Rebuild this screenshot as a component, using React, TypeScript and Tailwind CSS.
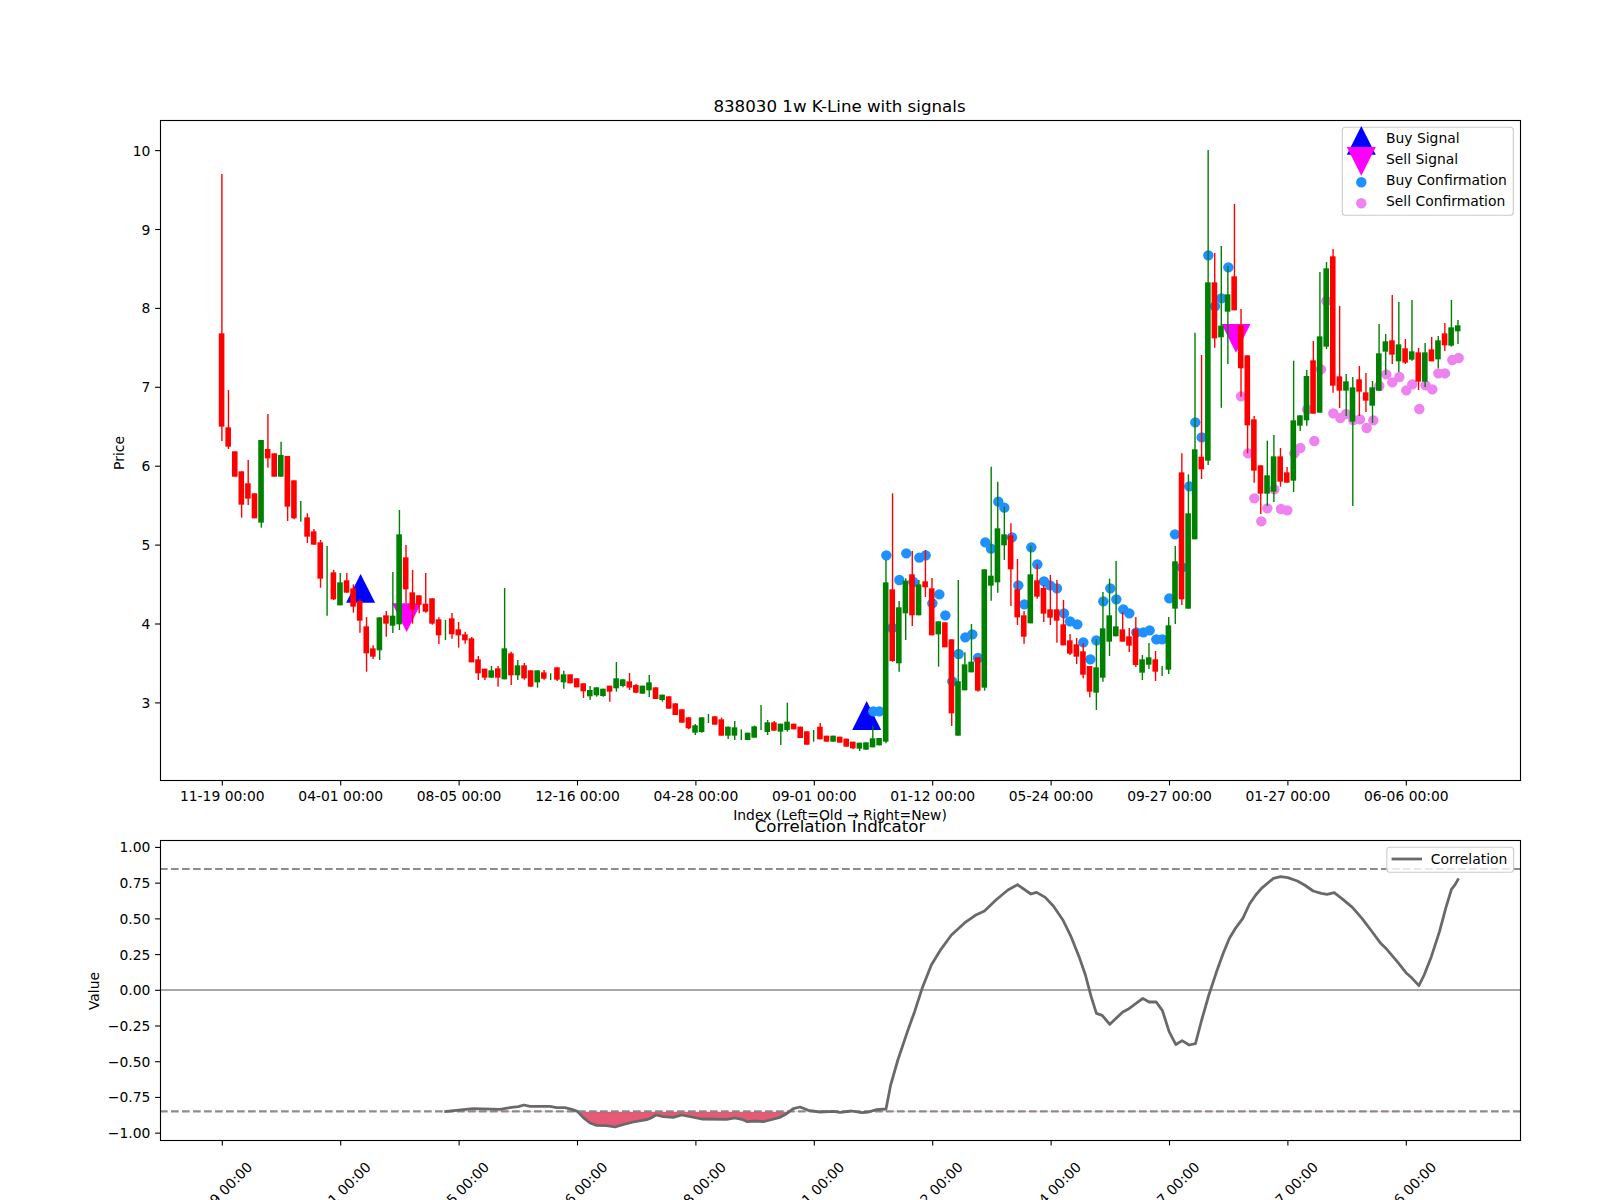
const X = (i: number) => 221.9 + 6.575 * i;

// Candle rows: [isRed, bodyTop, bodyBottom, wickTop, wickBottom], measured in 3x crop units from a y origin.
type Row = [number, number, number, number, number];
const segments: { y0: number; rows: Row[] }[] = [
  {
    y0: 450,
    rows: [
      [1, -350, -70, -828, -27], [1, -68, -10, -180, -3], [1, 4, 80, 4, 80], [1, 64, 164, 64, 203], [1, 100, 146, 30, 165],
      [1, 130, 205, 130, 205], [0, -30, 218, -30, 233], [1, -3, 25, -108, 53], [1, 10, 80, 10, 80], [0, 15, 80, -25, 80],
      [1, 18, 170, 18, 213], [1, 91, 205, 91, 208], [0, 184, 184, 153, 215], [1, 202, 260, 190, 279], [1, 244, 284, 237, 284],
      [1, 277, 386, 270, 413], [0, 390, 390, 288, 497], [1, 367, 448, 360, 450], [0, 397, 466, 369, 466], [1, 391, 428, 369, 428],
      [1, 415, 470, 403, 488], [1, 453, 512, 448, 548], [1, 529, 610, 501, 665], [1, 595, 620, 586, 627], [0, 502, 601, 502, 630],
      [1, 496, 521, 483, 560], [0, 497, 527, 366, 549], [0, 253, 523, 180, 540], [1, 322, 418, 285, 460], [1, 427, 478, 360, 521],
      [1, 436, 464, 436, 490], [1, 461, 485, 369, 488], [1, 445, 521, 445, 524], [1, 508, 556, 502, 582], [0, 540, 540, 510, 570],
      [1, 505, 553, 489, 566], [1, 538, 556, 516, 593], [1, 553, 571, 545, 581], [1, 565, 637, 561, 637], [1, 628, 670, 618, 690],
      [1, 656, 683, 656, 690], [0, 661, 683, 648, 683], [1, 655, 683, 648, 710], [0, 595, 688, 414, 688], [1, 610, 676, 605, 705],
      [0, 646, 676, 630, 690], [1, 646, 685, 639, 689], [1, 661, 710, 661, 710], [0, 661, 697, 661, 713], [1, 667, 686, 660, 689],
      [0, 680, 680, 670, 690], [1, 652, 689, 652, 693], [0, 673, 697, 662, 716], [1, 673, 700, 673, 700], [1, 685, 712, 685, 712],
      [1, 700, 724, 700, 744], [0, 720, 739, 708, 750], [0, 712, 736, 712, 740],
    ],
  },
  {
    y0: 600,
    rows: [
      [0, 266, 288, 266, 290], [1, 257, 275, 257, 305], [0, 235, 265, 186, 275], [0, 238, 258, 238, 262], [1, 244, 263, 219, 270],
      [1, 255, 278, 252, 280], [0, 257, 281, 257, 281], [0, 247, 271, 225, 291], [1, 262, 297, 262, 297], [0, 284, 300, 284, 305],
      [1, 289, 326, 289, 326], [1, 310, 345, 310, 345], [1, 328, 368, 328, 368], [1, 352, 385, 352, 388], [0, 376, 398, 372, 405],
      [0, 352, 396, 352, 398], [0, 355, 355, 342, 369], [1, 349, 374, 349, 374], [1, 358, 407, 353, 407], [0, 380, 407, 380, 417],
      [0, 382, 407, 363, 420], [0, 404, 404, 388, 420], [0, 398, 420, 398, 420], [0, 379, 413, 377, 413], [0, 352, 352, 315, 390],
      [0, 367, 396, 360, 405], [1, 367, 392, 363, 392], [0, 371, 395, 371, 435], [0, 365, 390, 308, 395], [1, 371, 388, 371, 388],
      [1, 380, 414, 380, 414], [1, 394, 434, 394, 434], [0, 407, 407, 390, 425], [1, 380, 418, 369, 418], [1, 407, 425, 407, 425],
      [0, 407, 425, 407, 425], [1, 410, 428, 410, 428], [1, 416, 440, 416, 440], [1, 425, 445, 425, 448], [0, 428, 446, 428, 453],
      [0, 427, 449, 427, 449], [0, 415, 442, 378, 442], [0, 414, 436, 414, 436],
    ],
  },
  {
    y0: 480,
    rows: [
      [0, 307, 785, 240, 790], [1, 328, 543, 40, 545], [0, 382, 550, 363, 575], [0, 302, 400, 295, 480], [1, 283, 406, 213, 438],
      [0, 313, 406, 300, 406], [1, 304, 322, 210, 351], [1, 325, 466, 294, 466], [0, 424, 463, 424, 560], [1, 427, 502, 427, 502],
      [1, 478, 700, 478, 738], [0, 604, 767, 300, 767], [0, 553, 631, 517, 631], [0, 545, 577, 432, 577], [1, 532, 632, 532, 635],
      [0, 268, 623, 268, 632], [0, 287, 317, -40, 362], [0, 145, 307, 5, 338], [0, 163, 196, 80, 240], [1, 166, 268, 130, 378],
      [1, 328, 412, 237, 435], [1, 406, 470, 393, 491], [0, 283, 430, 197, 430], [1, 301, 350, 252, 356], [1, 324, 401, 315, 426],
      [1, 388, 413, 285, 435], [1, 388, 422, 300, 488], [1, 433, 496, 360, 496], [1, 481, 521, 462, 525], [1, 493, 530, 474, 552],
      [1, 514, 584, 490, 595], [1, 558, 635, 558, 652], [0, 562, 638, 477, 690], [0, 445, 593, 336, 605], [0, 406, 485, 296, 528],
      [0, 439, 469, 243, 469], [1, 448, 485, 396, 485], [1, 469, 497, 444, 516], [1, 448, 555, 411, 561], [0, 538, 578, 525, 600],
      [0, 532, 554, 489, 567], [1, 538, 575, 513, 603], [0, 573, 573, 558, 588], [0, 436, 569, 411, 582],
    ],
  },
  {
    y0: 230,
    rows: [
      [0, 994, 1136, 948, 1182], [1, 727, 1108, 670, 1125], [0, 850, 1136, 733, 1136], [0, 658, 928, 308, 928], [1, 680, 718, 375, 747],
      [0, 157, 692, -240, 705], [1, 157, 325, 69, 353], [0, 287, 322, 48, 533], [0, 193, 245, 108, 402], [1, 139, 241, -78, 241],
      [1, 286, 415, 237, 500], [1, 376, 586, 376, 670], [1, 568, 722, 558, 758], [1, 706, 791, 706, 852], [0, 736, 791, 632, 828],
      [0, 679, 785, 615, 816], [1, 679, 755, 654, 770], [1, 727, 758, 711, 758], [0, 571, 752, 392, 786], [0, 556, 587, 556, 603],
      [0, 438, 571, 420, 587], [1, 391, 551, 333, 551], [0, 319, 548, 126, 548], [0, 115, 350, 96, 357], [1, 79, 467, 57, 488],
      [1, 439, 482, 228, 534], [0, 454, 482, 432, 558], [0, 472, 575, 441, 828], [1, 448, 485, 408, 558], [1, 487, 512, 429, 546],
      [0, 472, 527, 453, 579], [0, 370, 482, 282, 482], [0, 334, 365, 312, 435], [1, 331, 374, 195, 402], [0, 343, 394, 216, 426],
      [1, 355, 398, 327, 402], [0, 364, 389, 210, 392], [1, 367, 455, 354, 480], [0, 367, 455, 339, 471], [1, 358, 394, 321, 394],
      [0, 331, 388, 318, 415], [1, 310, 346, 279, 363], [0, 292, 347, 210, 350], [0, 286, 304, 270, 342],
    ],
  },
];

const candles = segments.flatMap((s) =>
  s.rows.map((r) => ({
    red: r[0] === 1,
    bt: s.y0 + r[1] / 3,
    bb: s.y0 + r[2] / 3,
    wt: s.y0 + r[3] / 3,
    wb: s.y0 + r[4] / 3,
  })),
);

const blueA: [number, number][] = [
  [40, 694], [58, 694], [79, 226], [118, 300], [139, 220], [178, 233], [197, 226], [160, 306], [238, 343], [217, 370], [256, 406],
  [97, 444], [296, 522], [316, 472], [337, 463], [354, 534], [277, 604], [376, 187], [393, 206], [415, 65], [433, 83], [456, 172],
  [514, 202], [532, 253], [475, 316], [493, 373], [552, 304], [570, 316], [591, 325], [612, 400], [630, 424], [652, 433], [670, 487],
  [709, 481], [691, 538], [730, 364], [751, 325], [769, 358], [790, 388], [808, 400], [829, 457], [850, 457], [869, 451], [889, 478],
  [907, 478],
];
const blueB: [number, number][] = [
  [28, 1105], [45, 913], [66, 1012], [88, 769], [106, 577], [125, 622], [145, 76], [165, 229], [184, 205], [205, 112],
];
const violet: [number, number][] = [
  [243, 499], [264, 670], [283, 805], [304, 874], [322, 835], [343, 778], [363, 837], [382, 841], [403, 670], [421, 654], [441, 538],
  [463, 633], [483, 418], [499, 213], [520, 550], [541, 564], [558, 552], [580, 570], [600, 568], [620, 594], [640, 571], [658, 468],
  [679, 433], [697, 457], [718, 441], [739, 481], [757, 463], [778, 537], [797, 466], [817, 478], [835, 430], [855, 430], [877, 390],
  [896, 384],
];

const lineA: [number, number][] = [
  [444.3, 1111.7], [473, 1108.7],
  ...([
    [0, 208], [35, 202], [55, 200], [72, 195], [90, 199], [150, 199], [170, 203], [195, 203], [215, 208], [232, 214], [250, 233], [270, 249],
    [290, 256], [320, 257], [345, 261], [365, 255], [400, 246], [440, 239], [455, 233], [468, 225], [490, 230], [520, 232], [545, 225],
    [575, 231], [605, 237], [680, 238], [705, 234], [725, 238], [742, 245], [765, 243], [790, 245], [810, 240], [840, 232], [860, 221],
    [880, 206], [900, 201], [925, 211], [960, 216], [1000, 214], [1020, 217], [1055, 213], [1085, 218], [1105, 216], [1130, 209], [1158, 207],
  ] as [number, number][]).map(([x, y]) => [500 + x / 3, 1040 + y / 3] as [number, number]),
];
const lineB: [number, number][] = ([
  [85, 765], [100, 690], [120, 605], [135, 545], [152, 470], [170, 405], [190, 358], [212, 315], [240, 278], [262, 256], [281, 243],
  [305, 210], [330, 180], [350, 164], [378, 192], [390, 187], [408, 202], [425, 228], [445, 270], [462, 320], [480, 385], [492, 435],
  [504, 500], [515, 550], [527, 556], [543, 583], [570, 546], [583, 536], [612, 505], [625, 516], [640, 516], [653, 542], [667, 605],
  [681, 644], [694, 632], [709, 645], [722, 641], [735, 570], [750, 495], [765, 430], [780, 370], [793, 325], [807, 292], [821, 265],
  [835, 222], [848, 195], [860, 175], [885, 145], [900, 140], [915, 143], [935, 153], [950, 165], [968, 183], [985, 190], [997, 193],
  [1012, 188], [1030, 208], [1050, 232], [1070, 265], [1090, 303], [1108, 338], [1122, 358], [1145, 397], [1162, 428], [1175, 445],
  [1189, 467], [1200, 435], [1215, 380], [1232, 305], [1245, 235], [1257, 178], [1265, 163], [1272, 145],
] as [number, number][]).map(([x, y]) => [850 + x / 2.09, 830 + y / 3] as [number, number]);
const corr = [...lineA, ...lineB];
const corrPts = corr.map((p) => p.join(",")).join(" ");
const fillPts = `${corrPts} 1459,1111.4 444,1111.4`;

const dates = ["11-19 00:00", "04-01 00:00", "08-05 00:00", "12-16 00:00", "04-28 00:00", "09-01 00:00", "01-12 00:00", "05-24 00:00", "09-27 00:00", "01-27 00:00", "06-06 00:00"];
const tickX = dates.map((_, k) => 222.3 + 118.4 * k);
const priceTicks = [10, 9, 8, 7, 6, 5, 4, 3];
const valueTicks = [
  ["1.00", 1], ["0.75", 0.75], ["0.50", 0.5], ["0.25", 0.25], ["0.00", 0],
  ["−0.25", -0.25], ["−0.50", -0.5], ["−0.75", -0.75], ["−1.00", -1],
] as [string, number][];
const vy = (v: number) => 990.3 - 142.86 * v;

function Tri({ cx, y1, y2, color }: { cx: number; y1: number; y2: number; color: string }) {
  return <polygon points={`${cx},${y1} ${cx - 14.5},${y2} ${cx + 14.5},${y2}`} fill={color} />;
}

export default function App() {
  return (
    <div className="w-[1600px] h-[1200px] bg-white overflow-hidden">
      <svg
        viewBox="0 0 1600 1200"
        width={1600}
        height={1200}
        className="block font-['DejaVu_Sans',sans-serif] text-[13.89px] fill-black"
      >
        <defs>
          <clipPath id="under">
            <rect x={160} y={1111.4} width={1360} height={29} />
          </clipPath>
        </defs>

        {/* Price panel */}
        <text x={839.5} y={112} textAnchor="middle" className="text-[16.67px]">838030 1w K-Line with signals</text>

        <Tri cx={360.6} y1={574} y2={602.7} color="#0000ff" />
        <Tri cx={406.6} y1={632} y2={603.3} color="#ff00ff" />
        <Tri cx={866.7} y1={701} y2={730} color="#0000ff" />
        <Tri cx={1236} y1={352.7} y2={324} color="#ff00ff" />
        {blueA.map(([x, y], i) => (
          <circle key={i} cx={860 + x / 3} cy={480 + y / 3} r={5.2} fill="#1e90ff" />
        ))}
        {blueB.map(([x, y], i) => (
          <circle key={i} cx={1160 + x / 3} cy={230 + y / 3} r={5.2} fill="#1e90ff" />
        ))}
        {violet.map(([x, y], i) => (
          <circle key={i} cx={1160 + x / 3} cy={230 + y / 3} r={5.2} fill="#ee82ee" />
        ))}

        {candles.map((c, i) => {
          const color = c.red ? "#ff0000" : "#008000";
          return (
            <g key={i}>
              <line x1={X(i)} x2={X(i)} y1={c.wt} y2={c.wb} stroke={color} strokeWidth={1.4} />
              {c.bb > c.bt && <rect x={X(i) - 3.1} y={c.bt} width={5.6} height={c.bb - c.bt} fill={color} />}
            </g>
          );
        })}

        <rect x={160.5} y={120.5} width={1360} height={660} fill="none" stroke="#000" strokeWidth={1.11} />
        {priceTicks.map((p) => {
          const y = 150.6 + (10 - p) * 78.9;
          return (
            <g key={p}>
              <line x1={155.1} x2={160} y1={y} y2={y} stroke="#000" strokeWidth={1.11} />
              <text x={150.3} y={y + 5} textAnchor="end">{p}</text>
            </g>
          );
        })}
        {tickX.map((x, k) => (
          <g key={k}>
            <line x1={x} x2={x} y1={781} y2={785.4} stroke="#000" strokeWidth={1.11} />
            <text x={x} y={801} textAnchor="middle">{dates[k]}</text>
          </g>
        ))}
        <text transform="translate(124,453) rotate(-90)" textAnchor="middle">Price</text>
        <text x={840} y={820} textAnchor="middle">Index (Left=Old → Right=New)</text>

        {/* Price legend */}
        <rect x={1342.3} y={127.3} width={171} height={88} rx={3} fill="#ffffff" fillOpacity={0.8} stroke="#cccccc" strokeWidth={1.11} />
        <Tri cx={1361.3} y1={126} y2={154.7} color="#0000ff" />
        <Tri cx={1361.3} y1={175.7} y2={147} color="#ff00ff" />
        <circle cx={1361.3} cy={182.3} r={5.2} fill="#1e90ff" />
        <circle cx={1361.3} cy={203.3} r={5.2} fill="#ee82ee" />
        <text x={1386} y={143}>Buy Signal</text>
        <text x={1386} y={164}>Sell Signal</text>
        <text x={1386} y={185}>Buy Confirmation</text>
        <text x={1386} y={206}>Sell Confirmation</text>

        {/* Correlation panel */}
        <text x={840} y={831.7} textAnchor="middle" className="text-[16.67px]">Correlation Indicator</text>
        <polygon points={fillPts} fill="#dc143c" fillOpacity={0.7} clipPath="url(#under)" />
        <rect x={160} y={989} width={1360} height={2} fill="#a9a9a9" />
        <line x1={160} x2={1520} y1={869} y2={869} stroke="#808080" strokeOpacity={0.9} strokeWidth={2.08} strokeDasharray="7.7 3.3" />
        <line x1={160} x2={1520} y1={1111.4} y2={1111.4} stroke="#808080" strokeOpacity={0.9} strokeWidth={2.08} strokeDasharray="7.7 3.3" />
        <polyline points={corrPts} fill="none" stroke="#696969" strokeWidth={2.78} strokeLinejoin="round" />

        <rect x={160.5} y={840.5} width={1360} height={300} fill="none" stroke="#000" strokeWidth={1.11} />
        {valueTicks.map(([label, v]) => (
          <g key={label}>
            <line x1={155.1} x2={160} y1={vy(v)} y2={vy(v)} stroke="#000" strokeWidth={1.11} />
            <text x={150.3} y={vy(v) + 5} textAnchor="end">{label}</text>
          </g>
        ))}
        {tickX.map((x, k) => (
          <g key={k}>
            <line x1={x} x2={x} y1={1141} y2={1145.4} stroke="#000" strokeWidth={1.11} />
            <text transform={`translate(${x + 31},1168) rotate(-45)`} textAnchor="end">{dates[k]}</text>
          </g>
        ))}
        <text transform="translate(99,991) rotate(-90)" textAnchor="middle">Value</text>

        {/* Correlation legend */}
        <rect x={1386.8} y={847.3} width={126.8} height={25} rx={3} fill="#ffffff" fillOpacity={0.8} stroke="#cccccc" strokeWidth={1.11} />
        <line x1={1391.6} x2={1422} y1={859} y2={859} stroke="#696969" strokeWidth={2.78} />
        <text x={1430.8} y={864}>Correlation</text>
      </svg>
    </div>
  );
}
